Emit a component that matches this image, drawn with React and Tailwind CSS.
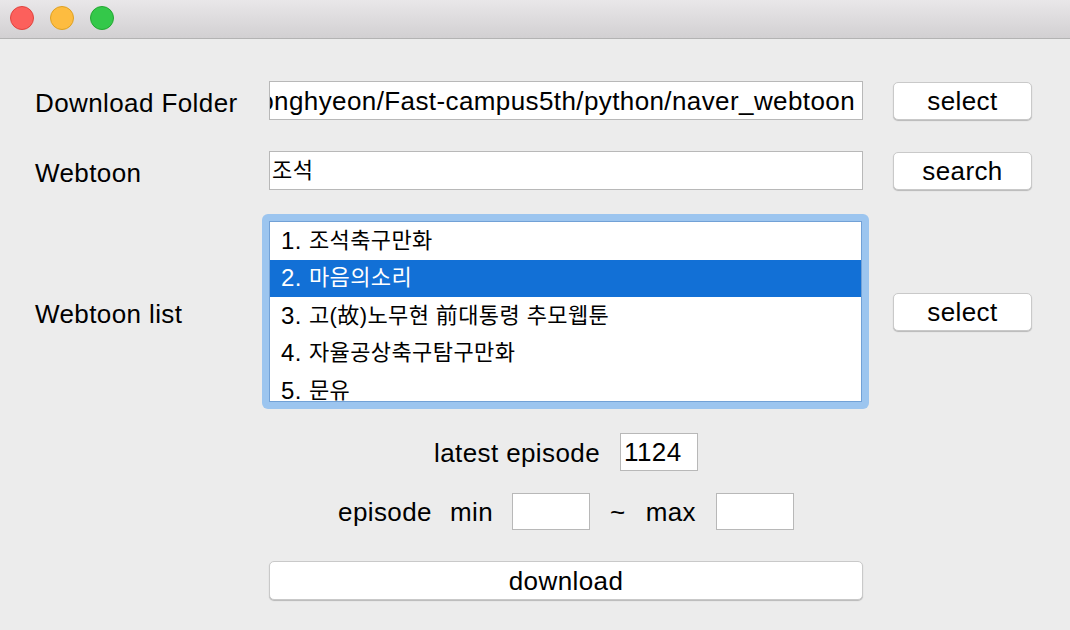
const items = [
  { n: '1.', t: '조석축구만화' },
  { n: '2.', t: '마음의소리', selected: true },
  { n: '3.', t: '고(故)노무현 前대통령 추모웹툰' },
  { n: '4.', t: '자율공상축구탐구만화' },
  { n: '5.', t: '문유' },
]

function MacButton({ children, className = '' }) {
  return (
    <button className={`flex items-center justify-center rounded-[5px] border border-[#c9c9c9] bg-white text-[26px] leading-none text-black shadow-[0_1px_1px_rgba(0,0,0,0.22)] ${className}`}>
      {children}
    </button>
  )
}

function Field({ children, className = '' }) {
  return (
    <div className={`flex items-center overflow-hidden whitespace-nowrap border border-[#b8b8b8] bg-white text-[26px] leading-none text-black ${className}`}>
      {children}
    </div>
  )
}

export default function App() {
  return (
    <div className="h-[630px] w-[1070px] overflow-hidden bg-[#ececec] font-['Liberation_Sans','Noto_Sans_CJK_KR',sans-serif] tracking-[0.4px] text-black">
      {/* title bar */}
      <div className="flex h-[39px] items-start gap-[16px] border-b border-[#b3b3b3] bg-gradient-to-b from-[#e9e7e9] to-[#d2d0d2] pl-[10px] pt-[6px]">
        <div className="h-[24px] w-[24px] rounded-full border border-[#e0443e] bg-[#fc605c]" />
        <div className="h-[24px] w-[24px] rounded-full border border-[#dea123] bg-[#fdbc40]" />
        <div className="h-[24px] w-[24px] rounded-full border border-[#24a732] bg-[#34c84a]" />
      </div>

      {/* download folder */}
      <div className="mt-[42px] flex items-center">
        <div className="w-[269px] pl-[35px] pt-[4px] text-[26px] leading-none">Download Folder</div>
        <Field className="h-[39px] w-[594px] justify-end pr-[7px]">/Users/donghyeon/Fast-campus5th/python/naver_webtoon</Field>
        <MacButton className="ml-[30px] h-[38px] w-[139px]">select</MacButton>
      </div>

      {/* webtoon search */}
      <div className="mt-[31px] flex items-center">
        <div className="w-[269px] pl-[35px] pt-[4px] text-[26px] leading-none">Webtoon</div>
        <Field className="h-[39px] w-[594px] pl-[2px]"><span className="text-[22px]">조석</span></Field>
        <MacButton className="ml-[30px] h-[38px] w-[139px]">search</MacButton>
      </div>

      {/* list */}
      <div className="mt-[24px] flex items-center">
        <div className="w-[262px] pl-[35px] pt-[4px] text-[26px] leading-none">Webtoon list</div>
        <div className="w-[607px] rounded-[6px] bg-[#9cc5ef] p-[7px]">
          <div className="h-[181px] overflow-hidden border border-[#72a1d6] bg-white">
            {items.map(it => (
              <div key={it.n} className={`flex h-[37.5px] items-center pl-[11px] leading-none ${it.selected ? 'bg-[#1270d6] text-white' : 'text-black'}`}>
                <span className="text-[24px]">{it.n}&nbsp;</span>
                <span className="text-[22px]">{it.t}</span>
              </div>
            ))}
          </div>
        </div>
        <MacButton className="ml-[24px] h-[38px] w-[139px]">select</MacButton>
      </div>

      {/* latest episode */}
      <div className="ml-[269px] mt-[24px] flex w-[594px] items-center justify-center">
        <span className="pt-[2px] text-[26px] leading-none">latest episode</span>
        <Field className="ml-[20px] h-[38px] w-[78px] pl-[3px]">1124</Field>
      </div>

      {/* range */}
      <div className="ml-[269px] mt-[22px] flex w-[594px] items-center justify-center text-[26px] leading-none">
        <span>episode</span>
        <span className="ml-[18px]">min</span>
        <Field className="ml-[19px] h-[37px] w-[78px]" />
        <span className="ml-[20px]">~</span>
        <span className="ml-[20px]">max</span>
        <Field className="ml-[20px] h-[37px] w-[78px]" />
      </div>

      <MacButton className="ml-[269px] mt-[31px] h-[39px] w-[594px]">download</MacButton>
    </div>
  )
}
